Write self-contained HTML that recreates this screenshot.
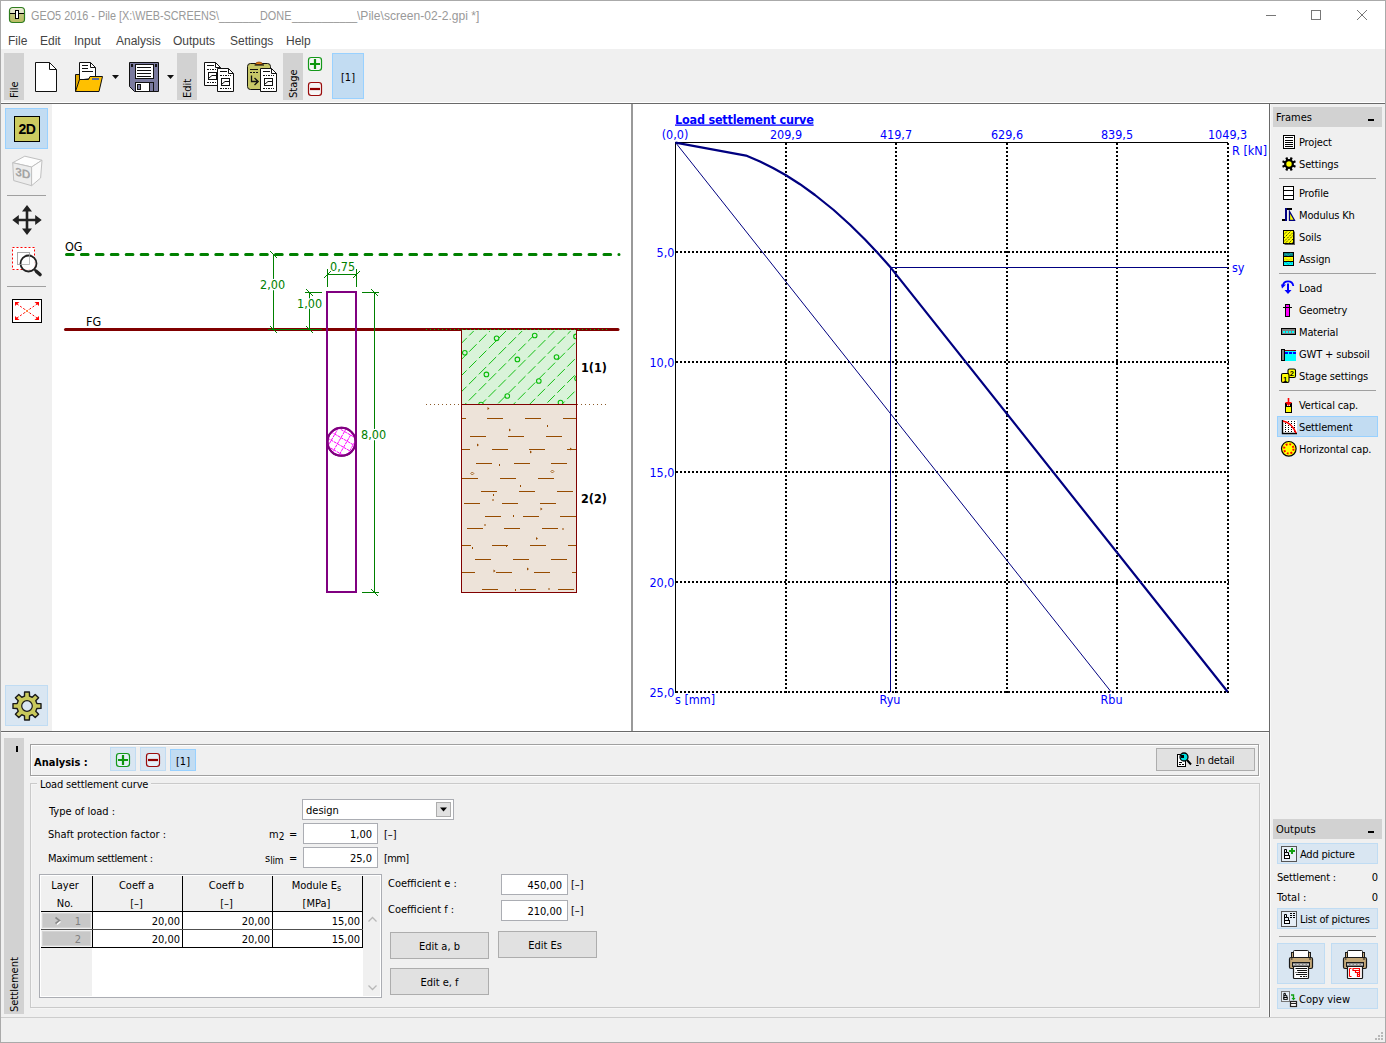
<!DOCTYPE html>
<html>
<head>
<meta charset="utf-8">
<title>GEO5 2016 - Pile</title>
<style>
html,body{margin:0;padding:0;background:#f0f0f0;}
body{width:1386px;height:1043px;overflow:hidden;position:relative;font-family:"DejaVu Sans Condensed","Liberation Sans",sans-serif;font-size:11px;color:#000;}
.a{position:absolute;}
.t{position:absolute;white-space:nowrap;line-height:13px;margin-top:1px;}
.seg{font-family:"Liberation Sans",sans-serif;}
.band{position:absolute;background:#d2d2d2;}
.vt{position:absolute;white-space:nowrap;transform:rotate(-90deg);transform-origin:0 0;line-height:13px;}
.hl{position:absolute;background:#c2dcf2;border:1px solid #99d1ff;box-sizing:border-box;}
.hl2{position:absolute;background:#d9e6f2;border:1px solid #c0dcf3;box-sizing:border-box;}
.inp{position:absolute;background:#fff;border:1px solid #abadb3;box-sizing:border-box;text-align:right;line-height:18px;padding-right:5px;padding-top:1px;overflow:hidden;}
.btn{position:absolute;background:#e1e1e1;border:1px solid #adadad;box-sizing:border-box;text-align:center;}
svg{position:absolute;left:0;top:0;overflow:visible;}
</style>
</head>
<body>
<!-- window frame -->
<div class="a" style="left:0;top:0;width:1386px;height:1043px;box-sizing:border-box;border:1px solid #aaaaaa;"></div>
<!-- title + menu -->
<div class="a" id="titlebar" style="left:1px;top:1px;width:1384px;height:48px;background:#fff;"></div>
<!-- toolbar -->
<div class="a" id="toolbar" style="left:1px;top:49px;width:1384px;height:53px;background:#f0f0f0;"></div>
<div class="a" style="left:1px;top:102px;width:1384px;height:1px;background:#fff;"></div>
<div class="a" style="left:1px;top:103px;width:1384px;height:1px;background:#696969;"></div>
<!-- left canvas -->
<div class="a" id="canvasL" style="left:52px;top:104px;width:579px;height:627px;background:#fff;"></div>
<div class="a" style="left:631px;top:104px;width:2px;height:627px;background:#999;"></div>
<!-- right canvas -->
<div class="a" id="canvasR" style="left:633px;top:104px;width:636px;height:627px;background:#fff;"></div>
<div class="a" style="left:1px;top:731px;width:1268px;height:1px;background:#696969;"></div>
<div class="a" style="left:1px;top:732px;width:1268px;height:1px;background:#fafafa;"></div>
<div class="a" style="left:1269px;top:104px;width:1px;height:913px;background:#696969;"></div>
<div class="a" style="left:1270px;top:104px;width:1px;height:913px;background:#f8f8f8;"></div>
<div class="a" style="left:1268px;top:732px;width:1px;height:285px;background:#f8f8f8;"></div>
<!-- status bar -->
<div class="a" style="left:1px;top:1017px;width:1384px;height:1px;background:#cdcdcd;"></div>
<!--TOP-->
<!-- TITLE BAR -->
<svg width="1386" height="104" viewBox="0 0 1386 104">
  <defs>
    <linearGradient id="gico" x1="0" y1="0" x2="0" y2="1"><stop offset="0" stop-color="#ecedd8"/><stop offset="0.42" stop-color="#e3e4c4"/><stop offset="0.45" stop-color="#c3c680"/><stop offset="1" stop-color="#b9bc62"/></linearGradient>
  </defs>
  <rect x="9.5" y="7.5" width="15" height="15" rx="3.2" fill="url(#gico)" stroke="#2f7d1f" stroke-width="1.2"/>
  <rect x="10" y="13" width="14" height="1" fill="#000"/>
  <rect x="15.5" y="10.5" width="3" height="8" fill="#fff" stroke="#000" stroke-width="1"/>
  <!-- window controls -->
  <path d="M1266 15.500H1276" stroke="#777" stroke-width="1" fill="none"/>
  <rect x="1311.500" y="10.500" width="9" height="9" stroke="#777" stroke-width="1" fill="none"/>
  <path d="M1357 10L1367 20M1367 10L1357 20" stroke="#777" stroke-width="1" fill="none"/>
</svg>
<div class="t seg tt" style="left:30.6px;transform:scaleX(0.9035);">GEO5 2016 - Pile [X:\WEB-SCREENS\</div>
<div class="t seg tt" style="left:218.6px;transform:scaleX(0.8926);">_______</div>
<div class="t seg tt" style="left:260.3px;transform:scaleX(0.9056);">DONE</div>
<div class="t seg tt" style="left:291.7px;transform:scaleX(0.8894);">___________</div>
<div class="t seg tt" style="left:357.0px;transform:scaleX(1.0074);">\Pile\screen-02-2.gpi *]</div>
<style>.tt{top:8px;font-size:12px;line-height:15px;color:#999;transform-origin:0 0;}</style>
<!-- MENU -->
<div class="t seg m" style="left:8px;">File</div>
<div class="t seg m" style="left:40px;">Edit</div>
<div class="t seg m" style="left:74px;">Input</div>
<div class="t seg m" style="left:116px;">Analysis</div>
<div class="t seg m" style="left:173px;">Outputs</div>
<div class="t seg m" style="left:230px;">Settings</div>
<div class="t seg m" style="left:286px;">Help</div>
<style>.m{top:33px;font-size:12px;line-height:15px;color:#444;}</style>
<!-- TOOLBAR -->
<div class="band" style="left:4px;top:53px;width:20px;height:47px;"></div>
<div class="vt" style="left:8px;top:98px;">File</div>
<div class="band" style="left:177px;top:53px;width:20px;height:47px;"></div>
<div class="vt" style="left:181px;top:98px;">Edit</div>
<div class="band" style="left:283px;top:53px;width:20px;height:47px;"></div>
<div class="vt" style="left:287px;top:98px;">Stage</div>
<div class="hl" style="left:332px;top:53px;width:32px;height:46px;"></div>
<div class="t" style="left:332px;top:70px;width:32px;text-align:center;">[1]</div>
<svg width="1386" height="104" viewBox="0 0 1386 104">
  <!-- new -->
  <path d="M35.500 62.500H49.500L56.500 69.500V91.500H35.500Z" fill="#fff" stroke="#111" stroke-width="1"/>
  <path d="M49.500 62.500V69.500H56.500" fill="none" stroke="#111" stroke-width="1"/>
  <!-- open -->
  <path d="M75.500 91.500V74.500H79.500V80H96V76.500H98.500V78" fill="#e0a800" stroke="#111" stroke-width="1"/>
  <path d="M79.500 80V62.500H90.500L95.500 67.500V78Z" fill="#fff" stroke="#111" stroke-width="1"/>
  <path d="M90.500 62.500V67.500H95.500" fill="none" stroke="#111"/>
  <path d="M82 65.500H88M82 68.500H88M82 71.500H93" stroke="#111" stroke-width="1"/>
  <path d="M75.500 91.500L79.500 79.500L88.500 79.500L90 76.500H102.500L99 91.500Z" fill="#ffc000" stroke="#111" stroke-width="1"/>
  <rect x="92" y="78" width="7" height="2" fill="#5a6a9a"/>
  <path d="M112 75H119L115.500 79Z" fill="#111"/>
  <!-- save -->
  <path d="M129.500 62.500H158.500V91.500H134.500L129.500 86.500Z" fill="#7b7b9f" stroke="#111" stroke-width="1"/>
  <rect x="135.500" y="64.500" width="18" height="14" fill="#fff" stroke="#111"/>
  <path d="M137 67.500H151M137 70.500H151M137 73.500H151M137 76.500H151" stroke="#111" stroke-width="1" shape-rendering="crispEdges"/>
  <rect x="131" y="64" width="2" height="3" fill="#111"/><rect x="155" y="64" width="2" height="3" fill="#111"/>
  <rect x="135.500" y="82.500" width="14" height="9" fill="#fff" stroke="#111"/>
  <rect x="137.500" y="84.500" width="3" height="5" fill="#7b7b9f" stroke="#111"/>
  <rect x="149.500" y="82.500" width="4" height="9" fill="#7b7b9f" stroke="#111"/>
  <path d="M167 75H174L170.500 79Z" fill="#111"/>
  <!-- copy -->
  <g id="docA">
    <path d="M204.500 62.500H215.500L220.500 67.500V85.500H204.500Z" fill="#fff" stroke="#111"/>
    <path d="M215.500 62.500V67.500H220.500" fill="none" stroke="#111"/>
    <path d="M207 65.500H214" stroke="#111"/>
    <path d="M207 69.500H218M207 82.500H218" stroke="#111" stroke-dasharray="2 1 1 1"/>
    <rect x="208.500" y="72.500" width="8" height="7" fill="#fff" stroke="#111"/>
    <path d="M209 78L212 75.500H216" fill="none" stroke="#111"/>
  </g>
  <g id="docB">
    <path d="M217.500 68.500H228.500L233.500 73.500V91.500H217.500Z" fill="#fff" stroke="#111"/>
    <path d="M228.500 68.500V73.500H233.500" fill="none" stroke="#111"/>
    <path d="M220 71.500H227" stroke="#111"/>
    <path d="M220 75.500H231M220 88.500H231" stroke="#111" stroke-dasharray="2 1 1 1"/>
    <rect x="221.500" y="78.500" width="8" height="7" fill="#fff" stroke="#111"/>
    <path d="M222 84L225 81.500H229" fill="none" stroke="#111"/>
  </g>
  <!-- paste -->
  <rect x="247.500" y="63.500" width="23" height="26" rx="3" fill="#c8c868" stroke="#111"/>
  <path d="M255.500 64.500Q255.500 62 259 62Q262.500 62 262.500 64.500Z" fill="#e07a10" stroke="#7a3800" stroke-width="0.700"/>
  <path d="M254.500 65H264" stroke="#111" stroke-width="1.200"/>
  <path d="M250 69.500H258" stroke="#111"/>
  <path d="M250 72.500H258" stroke="#111" stroke-dasharray="2 1"/>
  <path d="M251.500 75.500V81.500H257M254.500 78L258.200 81.500L254.500 85" fill="none" stroke="#111" stroke-width="1.300"/>
  <g transform="translate(43,0)">
    <path d="M217.500 68.500H228.500L233.500 73.500V91.500H217.500Z" fill="#fff" stroke="#111"/>
    <path d="M228.500 68.500V73.500H233.500" fill="none" stroke="#111"/>
    <path d="M220 71.500H227" stroke="#111"/>
    <path d="M220 75.500H231M220 88.500H231" stroke="#111" stroke-dasharray="2 1 1 1"/>
    <rect x="221.500" y="78.500" width="8" height="7" fill="#fff" stroke="#111"/>
    <path d="M222 84L225 81.500H229" fill="none" stroke="#111"/>
  </g>
  <!-- plus / minus -->
  <rect x="308.5" y="57.5" width="13" height="13" rx="2.700" fill="#f6f6f6" stroke="#14981a" stroke-width="1.200"/>
  <path d="M310 64H320M315 59V69" stroke="#0f960f" stroke-width="2.200"/>
  <rect x="308.5" y="82.5" width="13" height="13" rx="2.700" fill="#f6f6f6" stroke="#9a0c0c" stroke-width="1.200"/>
  <path d="M310 89H320" stroke="#900000" stroke-width="2.200"/>
</svg>
<!--/TOP-->
<!--LEFT-->
<!-- LEFT SIDEBAR -->
<div class="hl" style="left:5px;top:108px;width:43px;height:41px;"></div>
<div class="a" style="left:14px;top:116px;width:26px;height:26px;box-sizing:border-box;background:#cccb60;border:1px solid #000;"></div>
<div class="t seg" style="left:14px;top:120px;width:26px;text-align:center;font-weight:bold;font-size:14px;line-height:16px;letter-spacing:-0.5px;">2D</div>
<div class="hl2" style="left:5px;top:685px;width:43px;height:41px;"></div>
<svg width="60" height="740" viewBox="0 0 60 740">
  <!-- 3D cube -->
  <path d="M12.700 162.700L24.800 156.200L42 160.200L31.600 167Z" fill="#fdfdfd" stroke="#c0c0c0" stroke-width="1"/>
  <path d="M12.700 162.700L31.600 167L31.600 185.700L13.700 180.600Z" fill="#ececec" stroke="#c0c0c0" stroke-width="1"/>
  <path d="M31.600 167L42 160.200L40.600 178L31.600 185.700Z" fill="#fbfbfb" stroke="#c0c0c0" stroke-width="1"/>
  <text x="0" y="0" font-family="Liberation Sans, sans-serif" font-weight="bold" font-size="12" fill="#a4a4a4" transform="translate(15.200,175.600) skewY(13)">3D</text>
  <rect x="7" y="195" width="39" height="1" fill="#a0a0a0"/>
  <!-- move -->
  <path d="M27 209V231M16 220H38" stroke="#222" stroke-width="2.600" fill="none"/>
  <path d="M27 205L32 211.500H22ZM27 235L32 228.500H22ZM12.300 220L18.800 215V225ZM41.700 220L35.200 215V225Z" fill="#222"/>
  <!-- zoom window -->
  <rect x="12.500" y="247.500" width="22" height="22" fill="#fff" stroke="#f00" stroke-width="1" stroke-dasharray="2 2"/>
  <rect x="17.500" y="252.500" width="12" height="12" fill="none" stroke="#a8a8a8" stroke-width="1"/>
  <circle cx="28.500" cy="263.500" r="8" fill="#fff" fill-opacity="0.85" stroke="#222" stroke-width="1.800"/>
  <path d="M17.500 252.500H29.500V264.500H17.500Z" fill="none" stroke="#a8a8a8" stroke-width="1" opacity="0.7"/>
  <path d="M34.500 269.500L36 271" stroke="#222" stroke-width="2" fill="none"/>
  <path d="M36.500 271.500L40 274.500" stroke="#222" stroke-width="3.600" stroke-linecap="round" fill="none"/>
  <rect x="7" y="286" width="39" height="1" fill="#a0a0a0"/>
  <!-- fit -->
  <rect x="12.500" y="299.500" width="29" height="23" fill="#fff" stroke="#000" stroke-width="1"/>
  <path d="M17 304L27 311L37 304M17 318L27 311L37 318" stroke="#f00" stroke-width="1" stroke-dasharray="2 1.800" fill="none"/>
  <path d="M15 302H19.500L15 306ZM39 302H34.500L39 306ZM15 320H19.500L15 316ZM39 320H34.500L39 316Z" fill="#f00"/>
  <path d="M25.500 309.500L28.500 312.500M28.500 309.500L25.500 312.500" stroke="#ff9040" stroke-width="1" opacity="0.800"/>
  <!-- gear -->
  <path d="M24.48 696.12L24.60 692.00L29.40 692.00L29.52 696.12L32.20 697.23L35.20 694.41L38.59 697.80L35.77 700.80L36.88 703.48L41.00 703.60L41.00 708.40L36.88 708.52L35.77 711.20L38.59 714.20L35.20 717.59L32.20 714.77L29.52 715.88L29.40 720.00L24.60 720.00L24.48 715.88L21.80 714.77L18.80 717.59L15.41 714.20L18.23 711.20L17.12 708.52L13.00 708.40L13.00 703.60L17.12 703.48L18.23 700.80L15.41 697.80L18.80 694.41L21.80 697.23Z" fill="#c9c95c" stroke="#1a1a1a" stroke-width="1.400" stroke-linejoin="round"/>
  <circle cx="27" cy="706" r="5.300" fill="#d9e6f2" stroke="#1a1a1a" stroke-width="1.200"/>
</svg>
<!--/LEFT-->
<!--CANVASL-->
<!-- LEFT CANVAS DRAWING -->
<svg width="1386" height="740" viewBox="0 0 1386 740" font-family="DejaVu Sans Condensed, Liberation Sans, sans-serif" font-size="12.5">
<defs>
<clipPath id="cl1"><rect x="462" y="330" width="114" height="74"/></clipPath>
<clipPath id="cl2"><rect x="462" y="405" width="114" height="187"/></clipPath>
<clipPath id="clc"><circle cx="341.5" cy="441.8" r="13.5"/></clipPath>
</defs>
<rect x="461.500" y="329.500" width="115" height="75" fill="#d9f3d9" stroke="none"/>
<rect x="461.500" y="404.500" width="115" height="187.500" fill="#ede3d9" stroke="none"/>
<g clip-path="url(#cl1)" stroke="#0abc0a" stroke-width="0.950" fill="none">
<path d="M347.50 328L267.50 408" stroke-dasharray="10.500 3.500" stroke-dashoffset="2"/>
<path d="M363.65 328L283.65 408" stroke-dasharray="10.500 3.500" stroke-dashoffset="7"/>
<path d="M379.80 328L299.80 408" stroke-dasharray="10.500 3.500" stroke-dashoffset="12"/>
<path d="M395.95 328L315.95 408" stroke-dasharray="10.500 3.500" stroke-dashoffset="3"/>
<path d="M412.10 328L332.10 408" stroke-dasharray="10.500 3.500" stroke-dashoffset="8"/>
<path d="M428.25 328L348.25 408" stroke-dasharray="10.500 3.500" stroke-dashoffset="13"/>
<path d="M444.40 328L364.40 408" stroke-dasharray="10.500 3.500" stroke-dashoffset="4"/>
<path d="M460.55 328L380.55 408" stroke-dasharray="10.500 3.500" stroke-dashoffset="9"/>
<path d="M476.70 328L396.70 408" stroke-dasharray="10.500 3.500" stroke-dashoffset="0"/>
<path d="M492.85 328L412.85 408" stroke-dasharray="10.500 3.500" stroke-dashoffset="5"/>
<path d="M509.00 328L429.00 408" stroke-dasharray="10.500 3.500" stroke-dashoffset="10"/>
<path d="M525.15 328L445.15 408" stroke-dasharray="10.500 3.500" stroke-dashoffset="1"/>
<path d="M541.30 328L461.30 408" stroke-dasharray="10.500 3.500" stroke-dashoffset="6"/>
<path d="M557.45 328L477.45 408" stroke-dasharray="10.500 3.500" stroke-dashoffset="11"/>
<path d="M573.60 328L493.60 408" stroke-dasharray="10.500 3.500" stroke-dashoffset="2"/>
<path d="M589.75 328L509.75 408" stroke-dasharray="10.500 3.500" stroke-dashoffset="7"/>
<path d="M605.90 328L525.90 408" stroke-dasharray="10.500 3.500" stroke-dashoffset="12"/>
<path d="M622.05 328L542.05 408" stroke-dasharray="10.500 3.500" stroke-dashoffset="3"/>
<path d="M638.20 328L558.20 408" stroke-dasharray="10.500 3.500" stroke-dashoffset="8"/>
<path d="M654.35 328L574.35 408" stroke-dasharray="10.500 3.500" stroke-dashoffset="13"/>
<path d="M670.50 328L590.50 408" stroke-dasharray="10.500 3.500" stroke-dashoffset="4"/>
<path d="M686.65 328L606.65 408" stroke-dasharray="10.500 3.500" stroke-dashoffset="9"/>
</g>
<g clip-path="url(#cl1)" stroke="#0abc0a" stroke-width="1.100" fill="#d9f3d9">
<circle cx="496.6" cy="338.3" r="2.300"/>
<circle cx="534.7" cy="335.5" r="2.300"/>
<circle cx="464.8" cy="352.8" r="2.300"/>
<circle cx="517.4" cy="359.4" r="2.300"/>
<circle cx="556.5" cy="357.0" r="2.300"/>
<circle cx="486.4" cy="374.4" r="2.300"/>
<circle cx="538.8" cy="381.0" r="2.300"/>
<circle cx="507.3" cy="396.0" r="2.300"/>
<circle cx="560.5" cy="402.5" r="2.300"/>
<circle cx="576.0" cy="336.4" r="2.300"/>
<circle cx="577.0" cy="378.5" r="2.300"/>
<circle cx="481.0" cy="404.5" r="2.300"/>
</g>
<path clip-path="url(#cl2)" d="M487.1 418.5H503.1M525.0 418.5H541.0M562.9 418.5H578.9M461.5 418.5H466.0M470.0 436.5H486.0M508.0 436.5H524.0M545.9 436.5H561.9M491.9 449.5H507.9M528.8 449.5H544.8M567.0 449.5H583.0M461.5 449.5H470.0M475.9 463.5H491.9M514.0 463.5H530.0M550.9 463.5H566.9M500.0 478.5H516.0M537.9 478.5H553.9M461.5 478.5H478.0M480.9 491.5H496.9M519.0 491.5H535.0M556.9 491.5H572.9M464.3 503.5H480.3M502.2 503.5H518.2M539.9 503.5H555.9M484.8 516.5H500.8M523.0 516.5H539.0M560.0 516.5H576.0M466.9 528.5H482.9M503.9 528.5H519.9M541.9 528.5H557.9M492.0 545.5H508.0M529.9 545.5H545.9M568.0 545.5H584.0M461.5 545.5H471.0M474.9 559.5H490.9M512.9 559.5H528.9M550.9 559.5H566.9M496.1 572.5H512.1M534.0 572.5H550.0M571.9 572.5H587.9M461.5 572.5H475.0M481.9 589.5H497.9M519.9 589.5H535.9M557.9 589.5H573.9" stroke="#964b00" stroke-width="1" fill="none" shape-rendering="crispEdges"/>
<path clip-path="url(#cl2)" d="M487.5 407.0l2 1.5l-2 1.5ZM509.0 428.5l2 1.5l-2 1.5ZM477.0 443.5l2 1.5l-2 1.5ZM570.0 447.5l2 1.5l-2 1.5ZM530.0 450.5l2 1.5l-2 1.5ZM540.5 507.5l2 1.5l-2 1.5ZM536.0 537.0l2 1.5l-2 1.5ZM527.0 567.5l2 1.5l-2 1.5ZM493.5 569.5l2 1.5l-2 1.5Z" fill="#964b00" stroke="none"/>
<path clip-path="url(#cl2)" d="M547.5 425.0v2M499.5 464.0v2M520.5 485.0v2M493.5 494.0v2M493.0 499.0v2M513.5 515.0v2M485.0 524.0v2M563.0 528.0v2M472.5 547.0v2M506.5 545.0v2M549.0 588.0v2M515.5 589.0v2" stroke="#964b00" stroke-width="1" fill="none"/>
<path d="M472.3 472.0l1.5 1.5l-1.5 1.5l-1.5 -1.5Z" fill="none" stroke="#964b00" stroke-width="0.800"/>
<path d="M552.4 470.0l1.5 1.5l-1.5 1.5l-1.5 -1.5Z" fill="none" stroke="#964b00" stroke-width="0.800"/>
<path d="M461.500 330V592.500H576.500V330M461.500 404.500H576.500" fill="none" stroke="#800000" stroke-width="1" shape-rendering="crispEdges"/>
<path d="M426 404.500H461M577 404.500H609" stroke="#8a5a2a" stroke-width="1" stroke-dasharray="1 3" fill="none" shape-rendering="crispEdges"/>
<path d="M66.500 254.500H619" stroke="#008000" stroke-width="3" stroke-dasharray="6.700 8.230" stroke-linecap="round" fill="none"/>
<path d="M65.500 329.500H618" stroke="#800000" stroke-width="3" stroke-linecap="round" fill="none"/>
<rect x="462" y="330" width="114" height="1" fill="#d9f3d9"/>
<path d="M426 329.500H609" stroke="#00c000" stroke-width="1" stroke-dasharray="1 3" fill="none" shape-rendering="crispEdges"/>
<g stroke="#008000" stroke-width="1" fill="none">
<path d="M273.500 254.500V329.500M309.500 292.500V329.500M268 329.500H322M305 292.500H322M327.500 269V287M356.500 269V287M327.500 274.500H356.500M362 292.500H379M374.500 292.500V592.500M362 592.500H379"/>
<path d="M270.0 251.0L277.0 258.0M270.0 326.0L277.0 333.0M306.0 289.0L313.0 296.0M306.0 326.0L313.0 333.0M371.0 289.0L378.0 296.0M371.0 589.0L378.0 596.0M324.0 278.0L331.0 271.0M353.0 278.0L360.0 271.0"/>
</g>
<rect x="327" y="292" width="29" height="300" fill="none" stroke="#800080" stroke-width="2" shape-rendering="crispEdges"/>
<circle cx="341.500" cy="441.800" r="14" fill="#fff" stroke="#800080" stroke-width="2"/>
<path clip-path="url(#clc)" d="M338.1 411.6L369.3 429.6M330.0 414.4L312.0 445.6M334.6 417.7L365.8 435.7M336.1 417.9L318.1 449.1M331.1 423.8L362.3 441.8M342.2 421.4L324.2 452.6M327.6 429.9L358.7 447.9M348.3 425.0L330.3 456.1M324.0 436.0L355.2 454.0M354.4 428.5L336.4 459.7M320.5 442.2L351.7 460.2M360.6 432.0L342.6 463.2M317.0 448.3L348.2 466.3M366.7 435.5L348.7 466.7" stroke="#ff00ff" stroke-width="1" stroke-dasharray="3 0.800" fill="none"/>
<circle cx="341.500" cy="441.800" r="14" fill="none" stroke="#800080" stroke-width="2"/>
<g fill="#008000" stroke="#fff" stroke-width="2.500" paint-order="stroke" stroke-linejoin="round">
<text x="260" y="288.700">2,00</text>
<text x="297" y="307.700">1,00</text>
<text x="330" y="270.900">0,75</text>
<text x="361" y="439">8,00</text>
</g>
<text x="65" y="251" fill="#000">OG</text>
<text x="86" y="325.700" fill="#000">FG</text>
<text x="581" y="371.800" fill="#000" font-weight="bold">1(1)</text>
<text x="581" y="503" fill="#000" font-weight="bold">2(2)</text>
</svg>
<!--/CANVASL-->
<!--CHART-->
<!-- CHART -->
<svg width="1386" height="740" viewBox="0 0 1386 740" font-family="DejaVu Sans Condensed, Liberation Sans, sans-serif" font-size="12.500">
<g stroke="#000" stroke-width="2" stroke-dasharray="2 2" fill="none" shape-rendering="crispEdges">
<path d="M786 143V693M896 143V693M1007 143V693M1117 143V693M1228 143V693M676 252H1229M676 362H1229M676 472H1229M676 582H1229M676 692H1229"/>
</g>
<path d="M675.500 142V693M675 142.500H1228" stroke="#000" stroke-width="1" fill="none" shape-rendering="crispEdges"/>
<path d="M675.500 142.500L1111 691.700" stroke="#000080" stroke-width="1" fill="none"/>
<path d="M890.500 267.500V692M890.500 267.500H1228" stroke="#000080" stroke-width="1" fill="none" shape-rendering="crispEdges"/>
<path d="M675.5 142.7L746.0 155.6L760.0 161.6L773.0 168.0L786.0 175.3L800.0 184.2L815.0 195.0L833.7 210.0L850.0 224.7L865.0 239.5L876.8 251.9L890.7 267.6L1227.6 691.7" stroke="#000080" stroke-width="2.200" fill="none" stroke-linejoin="round"/>
<g fill="#0000ff">
<text x="675" y="123.500" font-weight="bold" font-size="12.500" text-decoration="underline" letter-spacing="-0.2" id="ctitle">Load settlement curve</text>
<text x="675.0" y="139" text-anchor="middle">(0,0)</text>
<text x="786.0" y="139" text-anchor="middle">209,9</text>
<text x="896.0" y="139" text-anchor="middle">419,7</text>
<text x="1007.0" y="139" text-anchor="middle">629,6</text>
<text x="1117.0" y="139" text-anchor="middle">839,5</text>
<text x="1227.6" y="139" text-anchor="middle">1049,3</text>
<text x="674.500" y="257" text-anchor="end">5,0</text>
<text x="674.500" y="367" text-anchor="end">10,0</text>
<text x="674.500" y="477" text-anchor="end">15,0</text>
<text x="674.500" y="587" text-anchor="end">20,0</text>
<text x="674.500" y="697" text-anchor="end">25,0</text>
<text x="1232" y="154.500">R [kN]</text>
<text x="1232" y="271.500">sy</text>
<text x="675" y="703.700">s [mm]</text>
<text x="890" y="703.700" text-anchor="middle">Ryu</text>
<text x="1111.500" y="703.700" text-anchor="middle">Rbu</text>
</g>
</svg>
<!--/CHART-->
<!--RIGHT-->
<!-- RIGHT PANEL -->
<div class="band" style="left:1273px;top:107px;width:109px;height:20px;"></div>
<div class="t" style="left:1276px;top:110px;">Frames</div>
<div class="a" style="left:1368px;top:119px;width:6px;height:2px;background:#000;"></div>
<div class="hl" style="left:1277px;top:416px;width:101px;height:21px;"></div>
<div class="a" style="left:1279px;top:178px;width:97px;height:1px;background:#a0a0a0;"></div>
<div class="a" style="left:1279px;top:273px;width:97px;height:1px;background:#a0a0a0;"></div>
<div class="a" style="left:1279px;top:390px;width:97px;height:1px;background:#a0a0a0;"></div>
<div class="t fr" style="top:135px;">Project</div>
<div class="t fr" style="top:157px;">Settings</div>
<div class="t fr" style="top:186px;">Profile</div>
<div class="t fr" style="top:208px;">Modulus Kh</div>
<div class="t fr" style="top:230px;">Soils</div>
<div class="t fr" style="top:252px;">Assign</div>
<div class="t fr" style="top:281px;">Load</div>
<div class="t fr" style="top:303px;">Geometry</div>
<div class="t fr" style="top:325px;">Material</div>
<div class="t fr" style="top:347px;">GWT + subsoil</div>
<div class="t fr" style="top:369px;">Stage settings</div>
<div class="t fr" style="top:398px;">Vertical cap.</div>
<div class="t fr" style="top:420px;">Settlement</div>
<div class="t fr" style="top:442px;">Horizontal cap.</div>
<style>.fr{left:1299px;letter-spacing:-0.15px;}</style>
<svg width="1386" height="470" viewBox="0 0 1386 470">
<rect x="1283.500" y="135.500" width="11" height="13" fill="#fff" stroke="#000"/>
<path d="M1285 137.500H1293M1285 140.500H1293M1285 142.500H1293M1285 144.500H1293M1285 146.500H1293" stroke="#000" stroke-width="1" shape-rendering="crispEdges"/>
<path d="M1292.23 165.34L1295.47 166.68M1290.34 167.23L1291.68 170.47M1287.66 167.23L1286.32 170.47M1285.77 165.34L1282.53 166.68M1285.77 162.66L1282.53 161.32M1287.66 160.77L1286.32 157.53M1290.34 160.77L1291.68 157.53M1292.23 162.66L1295.47 161.32" stroke="#000" stroke-width="2.200" fill="none"/>
<circle cx="1289" cy="164" r="3.800" fill="#ffff00" stroke="#000" stroke-width="2.200"/>
<rect x="1283.500" y="186.500" width="10" height="13" fill="#fff" stroke="#000"/>
<path d="M1283 190.500H1294M1283 195.500H1294" stroke="#000" shape-rendering="crispEdges"/>
<path d="M1282 220H1286M1287 209H1292" stroke="#000" stroke-width="2" shape-rendering="crispEdges"/>
<path d="M1286 208V221" stroke="#000080" stroke-width="2" shape-rendering="crispEdges"/>
<path d="M1289.500 211.500V220.300H1294.500Z" fill="#ffff00" stroke="#000080" stroke-width="1.300"/>
<rect x="1284.500" y="231.500" width="10.500" height="13.500" fill="#606060"/>
<rect x="1283.500" y="230.500" width="10" height="13" fill="#ffff00" stroke="#000"/>
<path d="M1284 234.500L1287.500 231M1284 238L1291 231M1284 241.500L1293.500 232M1285 243.500L1293.500 235M1288.500 243.500L1293.500 238.500M1291.500 243.500L1293.500 241.500" stroke="#303000" stroke-width="1" stroke-dasharray="1.500 1" fill="none"/>
<rect x="1283.500" y="252.500" width="10" height="13" fill="#ffff00" stroke="#000"/>
<rect x="1284" y="253" width="9" height="3.500" fill="#008080"/>
<rect x="1284" y="261.500" width="9" height="3.500" fill="#00ffff"/>
<path d="M1284 256.500H1293M1284 261.500H1293" stroke="#000" stroke-width="1" shape-rendering="crispEdges"/>
<path d="M1284.500 255q1.200 -1.800 2.500 -0.300t2.500 -0.300t2.500 -0.300" stroke="#30b0b0" stroke-width="0.900" fill="none"/>
<path d="M1284.500 259.500q1.200 -1.200 2.500 0t2.500 0t2.500 0" stroke="#c0c000" stroke-width="0.900" fill="none"/>
<path d="M1284.500 263q1.200 -1.500 2.500 0.300t2.500 0t2.500 0.300" stroke="#00a0a0" stroke-width="0.900" fill="none"/>
<path d="M1288 283.500V291" stroke="#0000ff" stroke-width="2" fill="none"/>
<path d="M1284.500 290H1291.500L1288 294Z" fill="#0000ff"/>
<path d="M1282.800 286A5.300 5.300 0 0 1 1293.300 286" stroke="#0000ff" stroke-width="1.800" fill="none"/>
<path d="M1281 284.500H1286L1282 288.500Z" fill="#0000ff"/>
<rect x="1285.500" y="304.500" width="4" height="12" fill="#ff00ff" stroke="#000"/>
<path d="M1283 307.500H1292" stroke="#000" shape-rendering="crispEdges"/>
<rect x="1281.500" y="328.500" width="14" height="6" fill="#808080" stroke="#000"/>
<path d="M1283 331.500H1294" stroke="#00ffff" stroke-width="2" stroke-dasharray="2 1" shape-rendering="crispEdges"/>
<rect x="1285" y="351" width="11" height="10" fill="#00ffff"/>
<path d="M1284 350.500H1296" stroke="#800000" stroke-width="1" shape-rendering="crispEdges"/>
<path d="M1285 353H1296" stroke="#0000ff" stroke-width="2" stroke-dasharray="3 1" shape-rendering="crispEdges"/>
<rect x="1281.500" y="349.500" width="3" height="11" fill="#808080" stroke="#000"/>
<rect x="1288" y="369" width="7.500" height="8.500" rx="1.500" fill="#ffff00" stroke="#000" stroke-width="1.100"/>
<rect x="1281.500" y="373.500" width="7.500" height="9" rx="1.500" fill="#ffff00" stroke="#000" stroke-width="1.100"/>
<text x="1283" y="381.500" font-family="Liberation Sans, sans-serif" font-weight="bold" font-size="7.500">1</text>
<text x="1289.700" y="376" font-family="Liberation Sans, sans-serif" font-weight="bold" font-size="7.500">2</text>
<rect x="1285.500" y="406.500" width="6" height="6" fill="#ffff00" stroke="#000"/>
<path d="M1285 403H1287V406H1285ZM1290 403H1292V406H1290Z" fill="#000"/>
<path d="M1288.500 398V404" stroke="#ff0000" stroke-width="1.600"/>
<path d="M1285 402H1292L1288.500 406Z" fill="#ff0000"/>
<rect x="1283" y="420" width="14" height="13" fill="#fff"/>
<path d="M1285 421.500H1297M1285 423.500H1297M1285 425.500H1297M1285 427.500H1297M1285 429.500H1297M1285 431.500H1297" stroke="#000" stroke-width="1" stroke-dasharray="1 2" shape-rendering="crispEdges"/>
<path d="M1282.500 420V433.500H1297" stroke="#000" stroke-width="1.400" fill="none"/>
<path d="M1283 421Q1292 423 1296 433" stroke="#ff0000" stroke-width="1.700" fill="none"/>
<circle cx="1288.800" cy="448.800" r="7.300" fill="#ffff00" stroke="#000" stroke-width="1.200"/>
<circle cx="1288.800" cy="448.800" r="4.700" fill="none" stroke="#ff0000" stroke-width="2" stroke-dasharray="1.800 1.890"/>
</svg>
<div class="band" style="left:1273px;top:819px;width:109px;height:20px;"></div>
<div class="t" style="left:1276px;top:822px;">Outputs</div>
<div class="a" style="left:1368px;top:831px;width:6px;height:2px;background:#000;"></div>
<div class="hl2" style="left:1277px;top:843px;width:101px;height:21px;"></div>
<div class="t" style="left:1300px;top:847px;letter-spacing:-0.2px;">Add picture</div>
<div class="t" style="left:1277px;top:870px;letter-spacing:-0.2px;">Settlement :</div>
<div class="t" style="left:1340px;top:870px;width:38px;text-align:right;">0</div>
<div class="t" style="left:1277px;top:890px;">Total :</div>
<div class="t" style="left:1340px;top:890px;width:38px;text-align:right;">0</div>
<div class="hl2" style="left:1277px;top:908px;width:101px;height:21px;"></div>
<div class="t" style="left:1300px;top:912px;letter-spacing:-0.2px;">List of pictures</div>
<div class="a" style="left:1279px;top:936px;width:97px;height:1px;background:#a0a0a0;"></div>
<div class="hl2" style="left:1277px;top:943px;width:48px;height:41px;"></div>
<div class="hl2" style="left:1331px;top:943px;width:47px;height:41px;"></div>
<div class="hl2" style="left:1277px;top:988px;width:101px;height:21px;"></div>
<div class="t" style="left:1299px;top:992px;">Copy view</div>
<svg width="1386" height="1043" viewBox="0 0 1386 1043">
<rect x="1281.500" y="846.500" width="15" height="15" fill="#e6eef6" stroke="#555"/>
<g transform="translate(1284.0,849.0)" fill="none" stroke="#000" stroke-width="1"><path d="M0.500 0.500V9.500M0.500 0.500H2.500V3.500H0.500M2.500 3.500H4.500V6.500H0.500"/><rect x="0.500" y="6.500" width="5" height="3" fill="#fff"/></g>
<path d="M1289 851H1295M1292 848V854" stroke="#10a010" stroke-width="2"/>
<rect x="1281.500" y="911.500" width="15" height="15" fill="#e6eef6" stroke="#555"/>
<g transform="translate(1284.0,914.0)" fill="none" stroke="#000" stroke-width="1"><path d="M0.500 0.500V9.500M0.500 0.500H2.500V3.500H0.500M2.500 3.500H4.500V6.500H0.500"/><rect x="0.500" y="6.500" width="5" height="3" fill="#fff"/></g>
<path d="M1290 913.500H1295M1290 915.500H1295M1290 917.500H1295" stroke="#000" stroke-width="1" stroke-dasharray="2 1" shape-rendering="crispEdges"/>
<g transform="translate(0,0)"><rect x="1291.500" y="952.500" width="19" height="6" fill="#c4a878" stroke="#1a1a1a"/><rect x="1293.500" y="950.500" width="15" height="8" rx="1" fill="#fff" stroke="#1a1a1a"/><rect x="1289.500" y="957.500" width="23" height="11" rx="1.500" fill="#c4a878" stroke="#1a1a1a" stroke-width="1.200"/><rect x="1291" y="958.500" width="1.500" height="1" fill="#1a1a1a"/><rect x="1309" y="958.500" width="2" height="1" fill="#1a1a1a"/><rect x="1292.500" y="962.500" width="17" height="4" fill="#888" stroke="#1a1a1a"/><path d="M1293 964.500H1309" stroke="#ccc" stroke-width="1" stroke-dasharray="2 1.500"/><rect x="1293.500" y="966.500" width="15" height="12" rx="0.800" fill="#fff" stroke="#1a1a1a" stroke-width="1.200"/></g>
<path d="M1295.500 968.500H1307M1297 970.500H1307M1295.500 972.500H1296.500M1297.500 972.500H1307M1296 974.500H1307M1300 976.500H1302M1303 976.500H1305M1305.500 976.500H1307" stroke="#111" stroke-width="1" fill="none"/>
<g transform="translate(54,0)"><rect x="1291.500" y="952.500" width="19" height="6" fill="#c4a878" stroke="#1a1a1a"/><rect x="1293.500" y="950.500" width="15" height="8" rx="1" fill="#fff" stroke="#1a1a1a"/><rect x="1289.500" y="957.500" width="23" height="11" rx="1.500" fill="#c4a878" stroke="#1a1a1a" stroke-width="1.200"/><rect x="1291" y="958.500" width="1.500" height="1" fill="#1a1a1a"/><rect x="1309" y="958.500" width="2" height="1" fill="#1a1a1a"/><rect x="1292.500" y="962.500" width="17" height="4" fill="#888" stroke="#1a1a1a"/><path d="M1293 964.500H1309" stroke="#ccc" stroke-width="1" stroke-dasharray="2 1.500"/><rect x="1293.500" y="966.500" width="15" height="12" rx="0.800" fill="#fff" stroke="#1a1a1a" stroke-width="1.200"/></g>
<path d="M1351.500 968.500H1349.500V976.500H1351.500" stroke="#f00" stroke-width="1" fill="none"/>
<path d="M1352.500 968.500H1359.500V976.500H1357.500V974.500H1359M1353 968.500V970.500H1359M1355.500 970.500V972.500H1359M1357.500 972.500V974.500" stroke="#f00" stroke-width="1.200" fill="none"/>
<rect x="1281.500" y="991.500" width="8" height="10" fill="#e6eef6" stroke="#777"/>
<g transform="translate(1283.500,993) scale(0.75)" fill="none" stroke="#000" stroke-width="1.300"><path d="M0.500 0.500V8.500M0.500 0.500H2.500V3.500H0.500M2.500 3.500H4.500V6H0.500"/><rect x="0.500" y="6" width="4.500" height="2.500" fill="#fff"/></g>
<path d="M1291 995H1293.500V998.500" stroke="#10a010" stroke-width="1.400" fill="none"/><path d="M1291.500 998H1295.500L1293.500 1000.500Z" fill="#10a010"/>
<rect x="1290.500" y="1001.500" width="6" height="5" fill="#fff" stroke="#222" stroke-width="1.200"/>
<path d="M1291 1003.500H1296" stroke="#222" stroke-width="1"/>
<g fill="#b8b8b8"><rect x="1381" y="1032" width="2" height="2"/><rect x="1378" y="1035" width="2" height="2"/><rect x="1381" y="1035" width="2" height="2"/><rect x="1375" y="1038" width="2" height="2"/><rect x="1378" y="1038" width="2" height="2"/><rect x="1381" y="1038" width="2" height="2"/></g>
</svg>
<!--/RIGHT-->
<!--BOTTOM-->
<!-- BOTTOM PANEL -->
<div class="band" style="left:4px;top:738px;width:20px;height:276px;"></div>
<div class="a" style="left:16px;top:746px;width:2px;height:6px;background:#000;"></div>
<div class="vt" style="left:8px;top:1012px;">Settlement</div>
<div class="a" style="left:31px;top:745px;width:1229px;height:32px;box-sizing:border-box;border:1px solid #fff;"></div>
<div class="a" style="left:30px;top:744px;width:1229px;height:32px;box-sizing:border-box;border:1px solid #a0a0a0;"></div>
<div class="t" style="left:34px;top:755px;font-weight:bold;" id="anl">Analysis :</div>
<div class="hl2" style="left:110px;top:747px;width:26px;height:24px;"></div>
<div class="hl2" style="left:140px;top:747px;width:26px;height:24px;"></div>
<div class="hl" style="left:170px;top:749px;width:26px;height:22px;"></div>
<div class="t" style="left:170px;top:754px;width:26px;text-align:center;">[1]</div>
<div class="btn" style="left:1156px;top:748px;width:99px;height:23px;"></div>
<div class="t" style="left:1196px;top:753px;letter-spacing:-0.2px;"><span style="text-decoration:underline;">I</span>n detail</div>
<div class="a" style="left:30px;top:783px;width:1230px;height:225px;box-sizing:border-box;border:1px solid #cacaca;box-shadow:inset 1px 1px 0 #f5f5f5, 1px 1px 0 #f5f5f5;"></div>
<div class="t" style="left:37px;top:777px;background:#f0f0f0;padding:0 3px;letter-spacing:-0.15px;">Load settlement curve</div>
<div class="t" style="left:49px;top:804px;">Type of load :</div>
<div class="t" style="left:48px;top:827px;">Shaft protection factor :</div>
<div class="t" style="left:48px;top:851px;letter-spacing:-0.37px;">Maximum settlement :</div>
<div class="t" style="left:269px;top:827px;">m<span style="font-size:10px;position:relative;top:2px;">2</span></div>
<div class="t" style="left:289px;top:827px;">=</div>
<div class="t" style="left:265px;top:851px;">s<span style="font-size:10px;position:relative;top:2px;letter-spacing:-0.2px;">lim</span></div>
<div class="t" style="left:289px;top:851px;">=</div>
<div class="inp" style="left:302px;top:799px;width:152px;height:21px;text-align:left;padding-left:3px;line-height:19px;">design</div>
<div class="a" style="left:436px;top:802px;width:15px;height:15px;box-sizing:border-box;background:#e1e1e1;border:1px solid #adadad;"></div>
<div class="inp" style="left:303px;top:823px;width:75px;height:21px;line-height:19px;">1,00</div>
<div class="inp" style="left:303px;top:847px;width:75px;height:21px;line-height:19px;">25,0</div>
<div class="t" style="left:384px;top:827px;">[–]</div>
<div class="t" style="left:384px;top:851px;letter-spacing:-0.6px;">[mm]</div>
<div class="a" style="left:39px;top:874px;width:343px;height:124px;box-sizing:border-box;border:1px solid #abadb3;background:#fff;"></div>
<div class="a" style="left:41px;top:876px;width:51px;height:120px;background:#f0f0f0;"></div>
<div class="a" style="left:41px;top:876px;width:322px;height:35px;background:#f0f0f0;"></div>
<div class="a" style="left:363px;top:876px;width:17px;height:120px;background:#f0f0f0;"></div>
<div class="a" style="left:40px;top:996px;width:341px;height:1px;background:#fff;"></div>
<div class="a" style="left:42px;top:913px;width:49px;height:15px;background:#c8c8c8;box-sizing:border-box;border:1px solid #d4d4d4;"></div>
<div class="a" style="left:42px;top:931px;width:49px;height:15px;background:#c8c8c8;box-sizing:border-box;border:1px solid #d4d4d4;"></div>
<div class="a" style="left:92px;top:876px;width:1px;height:72px;background:#000;"></div>
<div class="a" style="left:182px;top:876px;width:1px;height:72px;background:#000;"></div>
<div class="a" style="left:272px;top:876px;width:1px;height:72px;background:#000;"></div>
<div class="a" style="left:362px;top:876px;width:1px;height:72px;background:#000;"></div>
<div class="a" style="left:41px;top:911px;width:322px;height:1px;background:#000;"></div>
<div class="a" style="left:41px;top:929px;width:322px;height:1px;background:#505050;"></div>
<div class="a" style="left:41px;top:947px;width:322px;height:1px;background:#000;"></div>
<div class="t" style="left:39px;top:878px;width:52px;text-align:center;">Layer</div>
<div class="t" style="left:39px;top:896px;width:52px;text-align:center;">No.</div>
<div class="t" style="left:92px;top:878px;width:89px;text-align:center;">Coeff a</div>
<div class="t" style="left:92px;top:896px;width:89px;text-align:center;">[–]</div>
<div class="t" style="left:182px;top:878px;width:89px;text-align:center;">Coeff b</div>
<div class="t" style="left:182px;top:896px;width:89px;text-align:center;">[–]</div>
<div class="t" style="left:272px;top:878px;width:89px;text-align:center;">Module E<span style="font-size:9px;position:relative;top:2px;">s</span></div>
<div class="t" style="left:272px;top:896px;width:89px;text-align:center;">[MPa]</div>
<div class="t" style="left:42px;top:914px;width:39px;text-align:right;color:#808080;">1</div>
<div class="t" style="left:120px;top:914px;width:60px;text-align:right;">20,00</div>
<div class="t" style="left:210px;top:914px;width:60px;text-align:right;">20,00</div>
<div class="t" style="left:300px;top:914px;width:60px;text-align:right;">15,00</div>
<div class="t" style="left:42px;top:932px;width:39px;text-align:right;color:#808080;">2</div>
<div class="t" style="left:120px;top:932px;width:60px;text-align:right;">20,00</div>
<div class="t" style="left:210px;top:932px;width:60px;text-align:right;">20,00</div>
<div class="t" style="left:300px;top:932px;width:60px;text-align:right;">15,00</div>
<div class="t" style="left:388px;top:876px;">Coefficient e :</div>
<div class="t" style="left:388px;top:902px;">Coefficient f :</div>
<div class="inp" style="left:501px;top:874px;width:67px;height:21px;line-height:19px;">450,00</div>
<div class="inp" style="left:501px;top:900px;width:67px;height:21px;line-height:19px;">210,00</div>
<div class="t" style="left:571px;top:877px;">[–]</div>
<div class="t" style="left:571px;top:903px;">[–]</div>
<div class="btn" style="left:390px;top:932px;width:99px;height:27px;line-height:27px;">Edit a, b</div>
<div class="btn" style="left:498px;top:931px;width:99px;height:27px;line-height:27px;padding-right:5px;">Edit Es</div>
<div class="btn" style="left:390px;top:968px;width:99px;height:27px;line-height:27px;">Edit e, f</div>
<svg width="1386" height="1043" viewBox="0 0 1386 1043">
<rect x="116.5" y="753.5" width="13" height="13" rx="2.700" fill="#e4eff8" stroke="#14981a" stroke-width="1.200"/>
<path d="M118 760H128M123 755V765" stroke="#0f960f" stroke-width="2.200"/>
<rect x="146.5" y="753.5" width="13" height="13" rx="2.700" fill="#e4eff8" stroke="#9a0c0c" stroke-width="1.200"/>
<path d="M148 760H158" stroke="#900000" stroke-width="2.200"/>
<path d="M440 807.500H447L443.500 811.500Z" fill="#000"/>
<path d="M368.500 921.500L372.500 917.500L376.500 921.500M368.500 985.500L372.500 989.500L376.500 985.500" fill="none" stroke="#b8b8b8" stroke-width="1.300"/>
<path d="M55.500 917.500L59.500 920.500L55.500 923.500" fill="none" stroke="#888" stroke-width="1.600"/>
<path d="M57 924.500L60.500 921.500" fill="none" stroke="#fff" stroke-width="1.200"/>
<rect x="1177.500" y="754.500" width="8" height="12" fill="#fff" stroke="#000"/>
<path d="M1179 762.500H1182M1179 764.500H1181M1182 764.500H1184" stroke="#000" stroke-width="1"/>
<circle cx="1184" cy="757" r="4" fill="#00e0e0" stroke="#000" stroke-width="1.300"/>
<rect x="1181" y="755" width="3" height="3" fill="#000"/>
<path d="M1187 760L1191 764.500" stroke="#000" stroke-width="2"/>
</svg>
<!--/BOTTOM-->
<!--SECTIONS-->
</body>
</html>
